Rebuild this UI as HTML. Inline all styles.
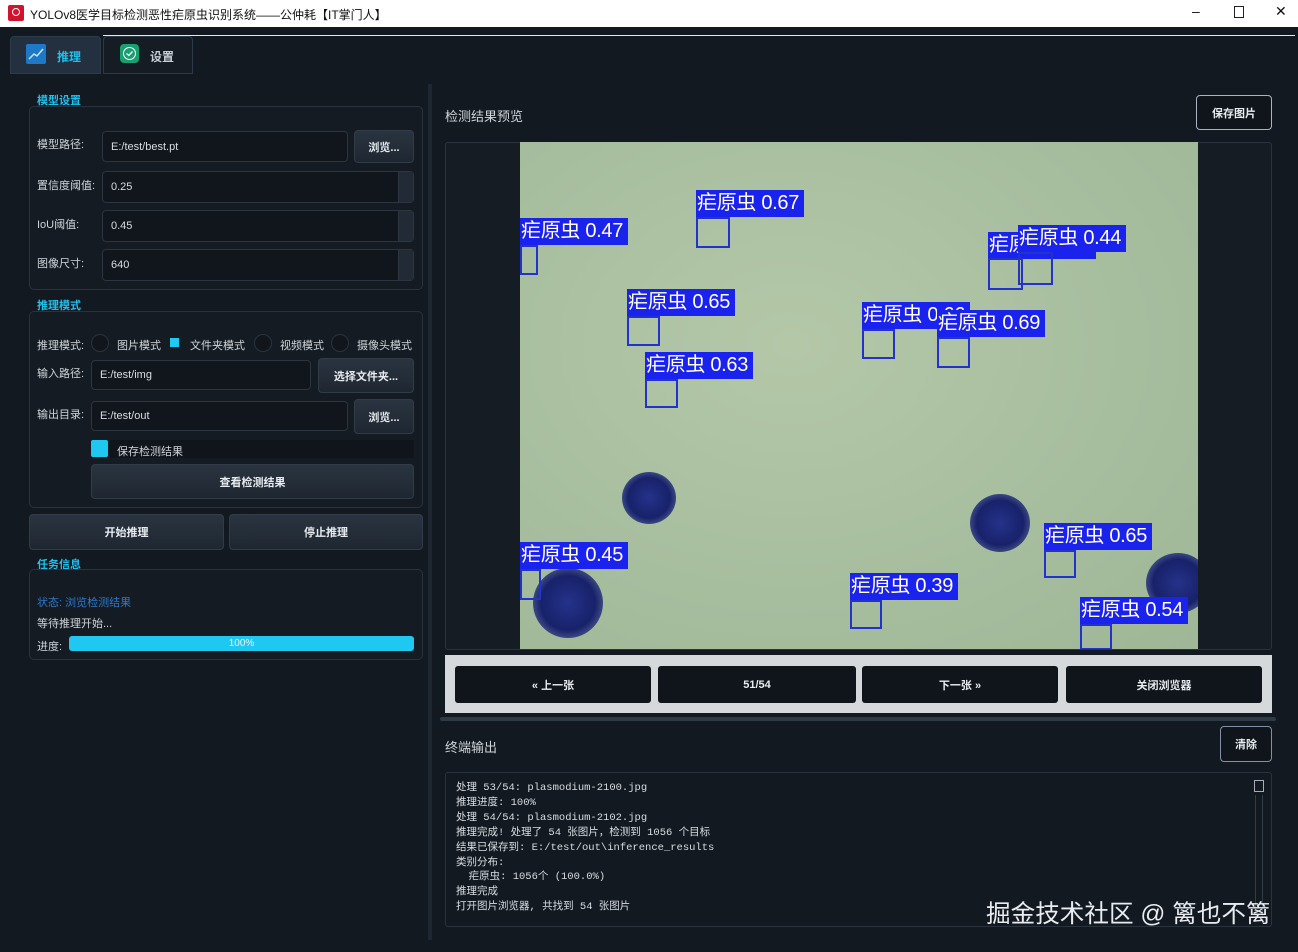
<!DOCTYPE html>
<html><head><meta charset="utf-8"><style>
*{box-sizing:border-box;margin:0;padding:0}
body{width:1298px;height:952px;background:#121920;font-family:"Liberation Sans","Noto Sans CJK SC",sans-serif;color:#d8dde2;position:relative;overflow:hidden;font-size:11px}
.a{position:absolute}
.title{left:0;top:0;width:1298px;height:27px;background:#fff;color:#111;font-size:12px}
.grp{border:1px solid #2a333d;border-radius:5px;background:#141b22}
.lbl{font-size:11px;color:#d0d5da}
.hd{color:#1ec0ee;font-weight:bold;font-size:11px}
.inp{background:#10161c;border:1px solid #2c3540;border-radius:4px;color:#d8dde2;font-size:11px;padding-left:8px;display:flex;align-items:center}
.btn{background:linear-gradient(#2a3440,#1e2731);border:1px solid #323c48;border-radius:4px;color:#e8ecf0;font-weight:bold;font-size:11px;display:flex;align-items:center;justify-content:center}
.spin{background:#222b35;border-left:1px solid #2c3540}
.rad{width:18px;height:18px;border-radius:50%;border:1px solid #2a333d;background:#10161c}
.L{background:#1a22ee;color:#fff;font-size:20px;line-height:27px;height:27px;width:108px;white-space:nowrap;overflow:hidden;padding-left:1px;letter-spacing:-0.3px}
.B{border:2px solid #2233cc}
.nb{background:#0f151b;border-radius:3px;color:#e8ecf0;font-weight:bold;font-size:11px;display:flex;align-items:center;justify-content:center;height:37px;top:666px}
.term{font-family:"Liberation Mono","Noto Sans CJK SC",monospace;font-size:10.5px;line-height:14.9px;color:#d8dde2}
.blob{border-radius:50%;background:radial-gradient(#24328a,#18226a 55%,#5a6a98 85%,rgba(160,180,150,0))}
</style></head><body>
<div class="a title">
 <div class="a" style="left:8px;top:5px;width:16px;height:16px;background:#d0142c;border-radius:2px"><div class="a" style="left:4px;top:3px;width:8px;height:8px;border:1.5px solid #fff;border-radius:50%"></div></div>
 <div class="a" style="left:30px;top:6px">YOLOv8医学目标检测恶性疟原虫识别系统——公仲耗【IT掌门人】</div>
 <div class="a" style="left:1192px;top:3px;font-size:14px">–</div>
 <div class="a" style="left:1234px;top:6px;width:10px;height:12px;border:1px solid #222"></div>
 <div class="a" style="left:1275px;top:3px;font-size:14px">✕</div>
</div>
<div class="a" style="left:103px;top:35px;width:1192px;height:1px;background:#e8e8e8"></div>
<div class="a" style="left:10px;top:36px;width:91px;height:38px;background:#223040;border:1px solid #2d3a48;border-radius:4px 4px 0 0"></div>
<div class="a" style="left:26px;top:44px;width:20px;height:20px;background:#1e78c8;border-radius:2px"><svg width="20" height="20"><path d="M3 15 L8 10 L11 12 L17 5" stroke="#cfe8ff" fill="none" stroke-width="1.4"/></svg></div>
<div class="a" style="left:57px;top:48px;color:#1ec0ee;font-weight:bold;font-size:12px">推理</div>
<div class="a" style="left:103px;top:36px;width:90px;height:38px;background:#151c24;border:1px solid #2d3a48;border-radius:4px 4px 0 0"></div>
<div class="a" style="left:120px;top:44px;width:19px;height:19px;background:#18a070;border-radius:4px"><div class="a" style="left:3px;top:3px;width:13px;height:13px;border:1.3px solid #fff;border-radius:50%"></div><svg class="a" width="19" height="19"><path d="M6.5 9.5 L8.8 11.5 L12.5 7.5" stroke="#fff" fill="none" stroke-width="1.3"/></svg></div>
<div class="a" style="left:150px;top:48px;color:#c8ced4;font-weight:bold;font-size:12px">设置</div>
<div class="a" style="left:428px;top:84px;width:4px;height:856px;background:#1e2731"></div>
<div class="a hd" style="left:37px;top:92px">模型设置</div>
<div class="a grp" style="left:29px;top:106px;width:394px;height:184px"></div>
<div class="a lbl" style="left:37px;top:136px">模型路径:</div>
<div class="a inp" style="left:102px;top:131px;width:246px;height:31px">E:/test/best.pt</div>
<div class="a btn" style="left:354px;top:130px;width:60px;height:33px">浏览...</div>
<div class="a lbl" style="left:37px;top:177px">置信度阈值:</div>
<div class="a inp" style="left:102px;top:171px;width:312px;height:32px">0.25</div><div class="a spin" style="left:398px;top:172px;width:15px;height:30px"></div>
<div class="a lbl" style="left:37px;top:216px">IoU阈值:</div>
<div class="a inp" style="left:102px;top:210px;width:312px;height:32px">0.45</div><div class="a spin" style="left:398px;top:211px;width:15px;height:30px"></div>
<div class="a lbl" style="left:37px;top:255px">图像尺寸:</div>
<div class="a inp" style="left:102px;top:249px;width:312px;height:32px">640</div><div class="a spin" style="left:398px;top:250px;width:15px;height:30px"></div>
<div class="a hd" style="left:37px;top:297px">推理模式</div>
<div class="a grp" style="left:29px;top:311px;width:394px;height:197px"></div>
<div class="a lbl" style="left:37px;top:337px">推理模式:</div>
<div class="a rad" style="left:91px;top:334px"></div><div class="a lbl" style="left:117px;top:337px">图片模式</div>
<div class="a" style="left:170px;top:338px;width:9px;height:9px;background:#1ec8f0"></div><div class="a lbl" style="left:190px;top:337px">文件夹模式</div>
<div class="a rad" style="left:254px;top:334px"></div><div class="a lbl" style="left:280px;top:337px">视频模式</div>
<div class="a rad" style="left:331px;top:334px"></div><div class="a lbl" style="left:357px;top:337px">摄像头模式</div>
<div class="a lbl" style="left:37px;top:365px">输入路径:</div>
<div class="a inp" style="left:91px;top:360px;width:220px;height:30px">E:/test/img</div>
<div class="a btn" style="left:318px;top:358px;width:96px;height:35px">选择文件夹...</div>
<div class="a lbl" style="left:37px;top:406px">输出目录:</div>
<div class="a inp" style="left:91px;top:401px;width:257px;height:30px">E:/test/out</div>
<div class="a btn" style="left:354px;top:399px;width:60px;height:35px">浏览...</div>
<div class="a" style="left:91px;top:440px;width:17px;height:17px;background:#1ec8f0;border-radius:2px"></div>
<div class="a" style="left:110px;top:440px;width:304px;height:18px;background:#0f151b"></div>
<div class="a lbl" style="left:117px;top:443px">保存检测结果</div>
<div class="a btn" style="left:91px;top:464px;width:323px;height:35px">查看检测结果</div>
<div class="a btn" style="left:29px;top:514px;width:195px;height:36px">开始推理</div>
<div class="a btn" style="left:229px;top:514px;width:194px;height:36px">停止推理</div>
<div class="a hd" style="left:37px;top:556px">任务信息</div>
<div class="a grp" style="left:29px;top:569px;width:394px;height:91px"></div>
<div class="a" style="left:37px;top:594px;color:#2a7ad0;font-size:11px">状态: 浏览检测结果</div>
<div class="a lbl" style="left:37px;top:615px">等待推理开始...</div>
<div class="a lbl" style="left:37px;top:638px">进度:</div>
<div class="a" style="left:69px;top:636px;width:345px;height:15px;background:#1ec8f0;border-radius:3px;color:#e8f8ff;font-size:10px;text-align:center;line-height:15px">100%</div>
<div class="a" style="left:445px;top:106px;font-size:13px;color:#d0d5da">检测结果预览</div>
<div class="a btn" style="left:1196px;top:95px;width:76px;height:35px;background:#0f151b;border:1px solid #a8b4c0">保存图片</div>
<div class="a" style="left:445px;top:142px;width:827px;height:508px;background:#151c23;border:1px solid #2a333d;border-radius:3px"></div>
<div class="a" style="left:520px;top:142px;width:678px;height:507px;background:radial-gradient(ellipse at 40% 40%,#b4c8a8,#a6bd9e 60%,#9fb697);overflow:hidden">
 <div class="a blob" style="left:102px;top:330px;width:54px;height:52px"></div>
 <div class="a blob" style="left:13px;top:426px;width:70px;height:70px"></div>
 <div class="a blob" style="left:450px;top:352px;width:60px;height:58px"></div>
 <div class="a blob" style="left:626px;top:411px;width:64px;height:60px"></div>
</div>
<div class="a" style="left:520px;top:142px;width:678px;height:507px;overflow:hidden">
 <div class="a L" style="left:0;top:76px">疟原虫 0.47</div><div class="a B" style="left:0;top:103px;width:18px;height:30px"></div>
 <div class="a L" style="left:176px;top:48px">疟原虫 0.67</div><div class="a B" style="left:176px;top:75px;width:34px;height:31px"></div>
 <div class="a L" style="left:468px;top:90px">疟原虫 0.51</div><div class="a B" style="left:468px;top:116px;width:35px;height:32px"></div>
 <div class="a L" style="left:498px;top:83px">疟原虫 0.44</div><div class="a B" style="left:498px;top:110px;width:35px;height:33px"></div>
 <div class="a L" style="left:107px;top:147px">疟原虫 0.65</div><div class="a B" style="left:107px;top:174px;width:33px;height:30px"></div>
 <div class="a L" style="left:342px;top:160px">疟原虫 0.66</div><div class="a B" style="left:342px;top:187px;width:33px;height:30px"></div>
 <div class="a L" style="left:417px;top:168px">疟原虫 0.69</div><div class="a B" style="left:417px;top:195px;width:33px;height:31px"></div>
 <div class="a L" style="left:125px;top:210px">疟原虫 0.63</div><div class="a B" style="left:125px;top:237px;width:33px;height:29px"></div>
 <div class="a L" style="left:0;top:400px">疟原虫 0.45</div><div class="a B" style="left:0;top:427px;width:21px;height:31px"></div>
 <div class="a L" style="left:330px;top:431px">疟原虫 0.39</div><div class="a B" style="left:330px;top:458px;width:32px;height:29px"></div>
 <div class="a L" style="left:524px;top:381px">疟原虫 0.65</div><div class="a B" style="left:524px;top:408px;width:32px;height:28px"></div>
 <div class="a L" style="left:560px;top:455px">疟原虫 0.54</div><div class="a B" style="left:560px;top:482px;width:32px;height:26px"></div>
</div>
<div class="a" style="left:445px;top:655px;width:827px;height:58px;background:#d6d9dc"></div>
<div class="a nb" style="left:455px;width:196px">« 上一张</div>
<div class="a nb" style="left:658px;width:198px">51/54</div>
<div class="a nb" style="left:862px;width:196px">下一张 »</div>
<div class="a nb" style="left:1066px;width:196px">关闭浏览器</div>
<div class="a" style="left:440px;top:717px;width:836px;height:4px;background:#2e3a46;border-radius:2px"></div>
<div class="a" style="left:445px;top:737px;font-size:13px;color:#d0d5da">终端输出</div>
<div class="a btn" style="left:1220px;top:726px;width:52px;height:36px;background:#0f151b;border:1px solid #8090a8">清除</div>
<div class="a" style="left:445px;top:772px;width:827px;height:155px;background:#121920;border:1px solid #2a333d;border-radius:3px"></div>
<div class="a" style="left:1254px;top:780px;width:10px;height:12px;border:1px solid #aab"></div>
<div class="a" style="left:1255px;top:795px;width:8px;height:125px;border-left:1px solid #333d48;border-right:1px solid #333d48"></div>
<div class="a term" style="left:456px;top:781px;white-space:pre">处理 53/54: plasmodium-2100.jpg
推理进度: 100%
处理 54/54: plasmodium-2102.jpg
推理完成! 处理了 54 张图片，检测到 1056 个目标
结果已保存到: E:/test/out\inference_results
类别分布:
  疟原虫: 1056个 (100.0%)
推理完成
打开图片浏览器, 共找到 54 张图片</div>
<div class="a" style="left:986px;top:894px;font-size:24.6px;color:#e8ecf0;white-space:nowrap">掘金技术社区 @ 篱也不篱</div>
</body></html>
